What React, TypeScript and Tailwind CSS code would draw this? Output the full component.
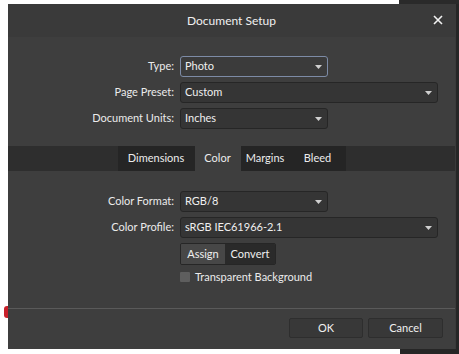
import { useState } from "react";

const font = { fontFamily: "Lato, 'Noto Sans', sans-serif" };

function Chevron() {
  return (
    <svg width="7" height="4" viewBox="0 0 7 4" className="shrink-0">
      <path d="M0 0 L7 0 L3.5 4 Z" fill="#d0d0d0" />
    </svg>
  );
}

function Select({
  value,
  wide,
  focused,
}: {
  value: string;
  wide?: boolean;
  focused?: boolean;
}) {
  return (
    <div
      className={`flex h-[21px] items-center justify-between rounded-[3px] border pl-[4px] pr-[5px] text-[11px] text-[#efefef] ${
        wide ? "w-[258px]" : "w-[148px]"
      } ${
        focused
          ? "border-[#7d8ba6] bg-[#3b3b3b]"
          : "border-[#262626] bg-[#353535]"
      }`}
    >
      <span>{value}</span>
      <Chevron />
    </div>
  );
}

function Row({ label, children }: { label: string; children: React.ReactNode }) {
  return (
    <div className="flex items-center">
      <div className="w-[166px] text-right text-[11px] text-[#ebebeb]">
        {label}
      </div>
      <div className="ml-[6px]">{children}</div>
    </div>
  );
}

export default function App() {
  const [tab, setTab] = useState("Color");
  const tabs = [
    { name: "Dimensions", w: "w-[77px]" },
    { name: "Color", w: "w-[46px]" },
    { name: "Margins", w: "w-[49px]" },
    { name: "Bleed", w: "w-[56px]" },
  ];

  return (
    <div className="flex h-[354px] w-[459px] overflow-hidden bg-white" style={font}>
      {/* left desktop strip */}
      <div className="flex w-[8px] flex-col bg-white">
        <div className="mt-[306px] ml-[4px] h-[12px] w-[4px] rounded-l-[3px] bg-[#c8202a]" />
      </div>

      <div className="flex w-[451px] flex-col">
        <div className="flex h-[4px]">
          <div className="w-[391px] bg-white" />
          <div className="flex-1 bg-[#2a2a2a]" />
        </div>

        <div className="flex">
          {/* dialog */}
          <div className="flex h-[345px] w-[447px] flex-col bg-[#3e3e3e]">
            <div className="relative flex h-[33px] items-center justify-center bg-[#3a3a3a] text-[12px] text-[#f0f0f0]">
              Document Setup
              <svg
                width="10"
                height="10"
                viewBox="0 0 10 10"
                className="absolute right-[12px] top-[11px]"
              >
                <path d="M1 1 L9 9 M9 1 L1 9" stroke="#f2f2f2" strokeWidth="1.6" />
              </svg>
            </div>

            <div className="mt-[19px] flex flex-col gap-[5px]">
              <Row label="Type:">
                <Select value="Photo" focused />
              </Row>
              <Row label="Page Preset:">
                <Select value="Custom" wide />
              </Row>
              <Row label="Document Units:">
                <Select value="Inches" />
              </Row>
            </div>

            <div className="mt-[17px] flex h-[25px] justify-center bg-[#2e2e2e]">
              <div className="flex bg-[#252525] text-[11px] text-[#ececec]">
                {tabs.map((t) => (
                  <div
                    key={t.name}
                    onClick={() => setTab(t.name)}
                    className={`flex items-center justify-center ${t.w} ${
                      tab === t.name ? "bg-[#3e3e3e]" : ""
                    }`}
                  >
                    {t.name}
                  </div>
                ))}
              </div>
            </div>

            <div className="mt-[20px] flex flex-col gap-[5px]">
              <Row label="Color Format:">
                <Select value="RGB/8" />
              </Row>
              <Row label="Color Profile:">
                <Select value="sRGB IEC61966-2.1" wide />
              </Row>
              <div className="ml-[172px] flex h-[22px] w-[96px] overflow-hidden rounded-[2px] border border-[#262626] text-[11px] text-[#efefef]">
                <div className="flex w-[44px] items-center justify-center bg-[#474747]">
                  Assign
                </div>
                <div className="flex flex-1 items-center justify-center bg-[#2a2a2a]">
                  Convert
                </div>
              </div>
              <div className="ml-[172px] mt-[-1px] flex items-center gap-[5px] text-[11px] text-[#ebebeb]">
                <div className="h-[10px] w-[10px] rounded-[1px] bg-[#5e5e5e]" />
                Transparent Background
              </div>
            </div>

            <div className="mt-auto border-t border-[#5a5a5a]">
              <div className="flex justify-end gap-[5px] pr-[12px] pt-[9px] pb-[11px] text-[11px] text-[#f0f0f0]">
                <div className="flex h-[20px] w-[74px] items-center justify-center rounded-[2px] border border-[#2e2e2e] bg-[#383838]">
                  OK
                </div>
                <div className="flex h-[20px] w-[75px] items-center justify-center rounded-[2px] border border-[#2e2e2e] bg-[#383838]">
                  Cancel
                </div>
              </div>
            </div>
          </div>
          <div className="w-[4px] border-l border-[#3a3a3a] bg-[#262626]" />
        </div>

        <div className="flex flex-1">
          <div className="w-[392px] bg-white" />
          <div className="flex-1 bg-[#262626]" />
        </div>
      </div>
    </div>
  );
}
